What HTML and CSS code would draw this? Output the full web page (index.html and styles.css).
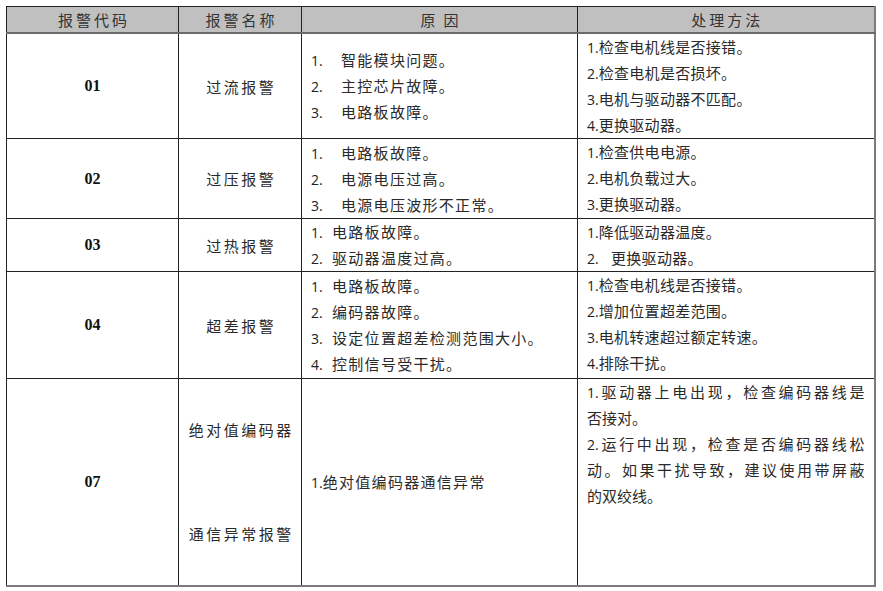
FILE: index.html
```html
<!DOCTYPE html>
<html lang="zh-CN">
<head>
<meta charset="utf-8">
<title>报警代码</title>
<link rel="stylesheet" href="styles.css">
</head>
<body>
<table class="alarm">
  <colgroup>
    <col class="c-code">
    <col class="c-name">
    <col class="c-cause">
    <col class="c-fix">
  </colgroup>
  <thead>
    <tr class="head">
      <th>报警代码</th>
      <th>报警名称</th>
      <th class="wide">原因</th>
      <th>处理方法</th>
    </tr>
  </thead>
  <tbody>
    <tr class="r1">
      <td class="code">01</td>
      <td class="name">过流报警</td>
      <td class="cause">
        <div class="ln"><span class="n tab">1.</span>智能模块问题。</div>
        <div class="ln"><span class="n tab">2.</span>主控芯片故障。</div>
        <div class="ln"><span class="n tab">3.</span>电路板故障。</div>
      </td>
      <td class="fix">
        <div class="ln"><span class="n">1.</span>检查电机线是否接错。</div>
        <div class="ln"><span class="n">2.</span>检查电机是否损坏。</div>
        <div class="ln"><span class="n">3.</span>电机与驱动器不匹配。</div>
        <div class="ln"><span class="n">4.</span>更换驱动器。</div>
      </td>
    </tr>
    <tr class="r2">
      <td class="code">02</td>
      <td class="name">过压报警</td>
      <td class="cause">
        <div class="ln"><span class="n tab">1.</span>电路板故障。</div>
        <div class="ln"><span class="n tab">2.</span>电源电压过高。</div>
        <div class="ln"><span class="n tab">3.</span>电源电压波形不正常。</div>
      </td>
      <td class="fix">
        <div class="ln"><span class="n">1.</span>检查供电电源。</div>
        <div class="ln"><span class="n">2.</span>电机负载过大。</div>
        <div class="ln"><span class="n">3.</span>更换驱动器。</div>
      </td>
    </tr>
    <tr class="r3">
      <td class="code">03</td>
      <td class="name">过热报警</td>
      <td class="cause">
        <div class="ln"><span class="n sp">1.</span>电路板故障。</div>
        <div class="ln"><span class="n sp">2.</span>驱动器温度过高。</div>
      </td>
      <td class="fix">
        <div class="ln"><span class="n">1.</span>降低驱动器温度。</div>
        <div class="ln"><span class="n sp2">2.</span>更换驱动器。</div>
      </td>
    </tr>
    <tr class="r4">
      <td class="code">04</td>
      <td class="name">超差报警</td>
      <td class="cause">
        <div class="ln"><span class="n sp">1.</span>电路板故障。</div>
        <div class="ln"><span class="n sp">2.</span>编码器故障。</div>
        <div class="ln"><span class="n sp">3.</span>设定位置超差检测范围大小。</div>
        <div class="ln"><span class="n sp">4.</span>控制信号受干扰。</div>
      </td>
      <td class="fix">
        <div class="ln"><span class="n">1.</span>检查电机线是否接错。</div>
        <div class="ln"><span class="n">2.</span>增加位置超差范围。</div>
        <div class="ln"><span class="n">3.</span>电机转速超过额定转速。</div>
        <div class="ln"><span class="n">4.</span>排除干扰。</div>
      </td>
    </tr>
    <tr class="r5">
      <td class="code">07</td>
      <td class="name">
        <div class="ln">绝对值编码器</div>
        <div class="ln blank"></div>
        <div class="ln blank"></div>
        <div class="ln blank"></div>
        <div class="ln">通信异常报警</div>
      </td>
      <td class="cause">
        <div class="ln"><span class="n">1.</span>绝对值编码器通信异常</div>
      </td>
      <td class="fix long">
        <div class="ln just"><span class="n">1.</span>驱动器上电出现，检查编码器线是</div>
        <div class="ln">否接对。</div>
        <div class="ln just"><span class="n">2.</span>运行中出现，检查是否编码器线松</div>
        <div class="ln just">动。如果干扰导致，建议使用带屏蔽</div>
        <div class="ln">的双绞线。</div>
      </td>
    </tr>
  </tbody>
</table>
</body>
</html>
```

FILE: styles.css
```css
html, body {
  margin: 0;
  padding: 0;
  background: #ffffff;
}

body {
  padding: 6px 0 0 6px;
  font-family: "Noto Sans CJK SC", "Noto Sans", sans-serif;
  font-size: 15px;
  color: #2a2a2a;
}

.alarm {
  border-collapse: collapse;
  table-layout: fixed;
  width: 868px;
  border-top: 1px solid #222;
  border-left: 1px solid #222;
  border-right: 2px solid #7a7a7a;
  border-bottom: 2px solid #7a7a7a;
}

.c-code { width: 172px; }
.c-name { width: 123px; }
.c-cause { width: 276px; }
.c-fix { width: 297px; }

.alarm th,
.alarm td {
  border: 1px solid #222;
  padding: 0;
}

.head th {
  height: 25px;
  background: #c0c0c0;
  font-weight: 400;
  font-size: 15px;
  letter-spacing: 3px;
  text-indent: 3px;
  line-height: 25px;
  color: #333;
  text-align: center;
  border-bottom: 2px solid #6a6a6a;
}

.head th.wide {
  letter-spacing: 8px;
  text-indent: 8px;
}

.r1 td { height: 104px; }
.r2 td { height: 79px; }
.r3 td { height: 51px; }
.r4 td { height: 106px; }
.r5 td { height: 206px; }

.ln {
  line-height: 26px;
  height: 26px;
  white-space: nowrap;
}

.code {
  text-align: center;
  vertical-align: middle;
  font-family: "Liberation Serif", "Times New Roman", serif;
  font-weight: 700;
  font-size: 16px;
  color: #111;
}

.name {
  text-align: center;
  vertical-align: middle;
  font-size: 15px;
  letter-spacing: 2.5px;
  text-indent: 2.5px;
}

.cause {
  vertical-align: middle;
  padding: 0 9px !important;
  letter-spacing: 1.3px;
}

.fix {
  vertical-align: top;
  padding: 0 9px !important;
  letter-spacing: 0.3px;
}

.n {
  display: inline-block;
  font-family: "Open Sans", "Liberation Sans", sans-serif;
  letter-spacing: 0;
  font-size: 14px;
  color: #222;
}

.n.tab { width: 30px; }
.n.sp { width: 21px; }
.n.sp2 { width: 24px; }

.fix.long {
  letter-spacing: 0;
}

.just {
  text-align: justify;
  text-align-last: justify;
  white-space: normal;
}
```
